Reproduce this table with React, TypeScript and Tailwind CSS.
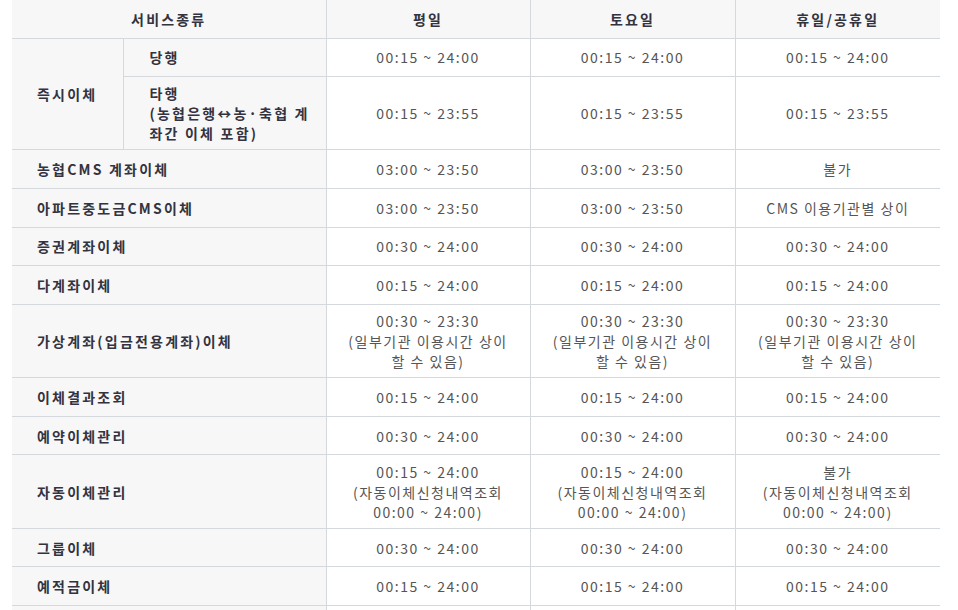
import React from 'react'

type Row = {
  label: string
  cells: React.ReactNode[]
}

const rows: Row[] = [
  { label: '농협CMS 계좌이체', cells: ['03:00 ~ 23:50', '03:00 ~ 23:50', '불가'] },
  { label: '아파트중도금CMS이체', cells: ['03:00 ~ 23:50', '03:00 ~ 23:50', 'CMS 이용기관별 상이'] },
  { label: '증권계좌이체', cells: ['00:30 ~ 24:00', '00:30 ~ 24:00', '00:30 ~ 24:00'] },
  { label: '다계좌이체', cells: ['00:15 ~ 24:00', '00:15 ~ 24:00', '00:15 ~ 24:00'] },
  {
    label: '가상계좌(입금전용계좌)이체',
    cells: [0, 1, 2].map((i) => (
      <React.Fragment key={i}>
        00:30 ~ 23:30
        <br />
        (일부기관 이용시간 상이
        <br />할 수 있음)
      </React.Fragment>
    )),
  },
  { label: '이체결과조회', cells: ['00:15 ~ 24:00', '00:15 ~ 24:00', '00:15 ~ 24:00'] },
  { label: '예약이체관리', cells: ['00:30 ~ 24:00', '00:30 ~ 24:00', '00:30 ~ 24:00'] },
  {
    label: '자동이체관리',
    cells: ['00:15 ~ 24:00', '00:15 ~ 24:00', '불가'].map((first, i) => (
      <React.Fragment key={i}>
        {first}
        <br />
        (자동이체신청내역조회
        <br />
        00:00 ~ 24:00)
      </React.Fragment>
    )),
  },
  { label: '그룹이체', cells: ['00:30 ~ 24:00', '00:30 ~ 24:00', '00:30 ~ 24:00'] },
  { label: '예적금이체', cells: ['00:15 ~ 24:00', '00:15 ~ 24:00', '00:15 ~ 24:00'] },
]

const th =
  'h-[38px] bg-[#f7f7f7] font-bold text-[#333340] text-center tracking-[2.2px] border-r border-[#d5d8dc] last:border-r-0'
const label =
  'h-[38.6px] bg-[#f7f7f7] font-bold text-[#333340] text-left tracking-[2.2px] pl-[25px] py-[6.2px] border-r border-[#d5d8dc]'
const cell =
  'h-[38.6px] text-center text-[#555] tracking-[1.5px] py-[6.2px] border-r border-[#d5d8dc] last:border-r-0'

export default function App() {
  return (
    <div
      className="h-[610px] overflow-hidden bg-white pl-3 pr-[18px] text-[14px] leading-5"
      style={{ fontFamily: '"Noto Sans CJK KR", "Noto Sans", sans-serif' }}
    >
      <table className="w-[928px] table-fixed border-collapse">
        <colgroup>
          <col className="w-[111px]" />
          <col className="w-[203px]" />
          <col className="w-[204px]" />
          <col className="w-[205px]" />
          <col className="w-[205px]" />
        </colgroup>
        <thead>
          <tr className="border-b border-[#d5d8dc]">
            <th colSpan={2} className={th}>서비스종류</th>
            <th className={th}>평일</th>
            <th className={th}>토요일</th>
            <th className={th}>휴일/공휴일</th>
          </tr>
        </thead>
        <tbody>
          <tr className="border-b border-[#d5d8dc]">
            <td rowSpan={2} className={label}>즉시이체</td>
            <td className={label + ' pl-[26px]'}>당행</td>
            <td className={cell}>00:15 ~ 24:00</td>
            <td className={cell}>00:15 ~ 24:00</td>
            <td className={cell}>00:15 ~ 24:00</td>
          </tr>
          <tr className="border-b border-[#d5d8dc]">
            <td className={label + ' pl-[26px]'}>
              타행
              <br />
              (농협은행↔농·축협 계
              <br />
              좌간 이체 포함)
            </td>
            <td className={cell}>00:15 ~ 23:55</td>
            <td className={cell}>00:15 ~ 23:55</td>
            <td className={cell}>00:15 ~ 23:55</td>
          </tr>
          {rows.map((r) => (
            <tr key={r.label} className="border-b border-[#d5d8dc]">
              <td colSpan={2} className={label}>{r.label}</td>
              {r.cells.map((c, i) => (
                <td key={i} className={cell}>{c}</td>
              ))}
            </tr>
          ))}
          {/* next row, only its top edge is visible */}
          <tr>
            <td colSpan={2} className={label}></td>
            <td className={cell}></td>
            <td className={cell}></td>
            <td className={cell}></td>
          </tr>
        </tbody>
      </table>
    </div>
  )
}
